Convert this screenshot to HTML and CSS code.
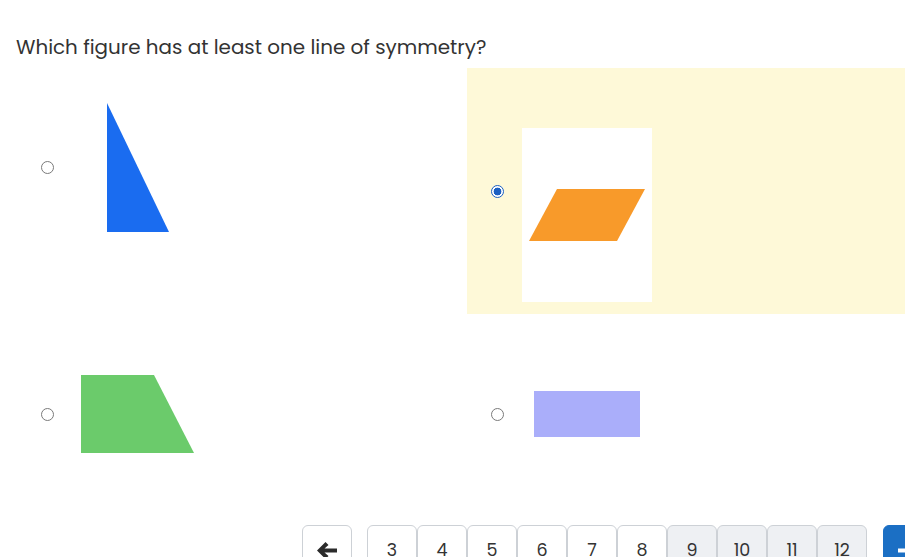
FILE: index.html
```html
<!DOCTYPE html>
<html lang="en">
<head>
<meta charset="utf-8">
<title>Question</title>
<link rel="stylesheet" href="styles.css">
</head>
<body>
<div class="page">
  <h1 class="question">Which figure has at least one line of symmetry?</h1>
  <div class="options">
    <label class="option opt-a">
      <input type="radio" name="ans" class="radio">
      <svg class="fig fig-tri" width="62" height="129" viewBox="0 0 62 129"><polygon points="0,0 62,129 0,129" fill="#1a6cf0"/></svg>
    </label>
    <label class="option opt-b selected">
      <input type="radio" name="ans" class="radio" checked>
      <span class="imgbox">
        <svg width="130" height="174" viewBox="0 0 130 174"><polygon points="7,113 35,61 123,61 95,113" fill="#f89a2a"/></svg>
      </span>
    </label>
    <label class="option opt-c">
      <input type="radio" name="ans" class="radio">
      <svg class="fig fig-trap" width="113" height="78" viewBox="0 0 113 78"><polygon points="0,0 73,0 113,78 0,78" fill="#6bcb6b"/></svg>
    </label>
    <label class="option opt-d">
      <input type="radio" name="ans" class="radio">
      <svg class="fig fig-rect" width="106" height="46" viewBox="0 0 106 46"><rect width="106" height="46" fill="#aaaefa"/></svg>
    </label>
  </div>
  <nav class="pager">
    <button class="pbtn back" aria-label="Previous">
      <svg width="22" height="19" viewBox="0 0 22 19"><path d="M9.5 1 L1 9.5 L9.5 18 L12.5 15 L8.5 11.5 H21 V7.5 H8.5 L12.5 4 Z" fill="#2b2b2b"/></svg>
    </button>
    <div class="nums">
      <button class="pbtn num">3</button>
      <button class="pbtn num">4</button>
      <button class="pbtn num">5</button>
      <button class="pbtn num">6</button>
      <button class="pbtn num">7</button>
      <button class="pbtn num">8</button>
      <button class="pbtn num dim">9</button>
      <button class="pbtn num dim">10</button>
      <button class="pbtn num dim">11</button>
      <button class="pbtn num dim">12</button>
    </div>
    <button class="pbtn next" aria-label="Next">
      <svg width="22" height="19" viewBox="0 0 22 19"><path d="M12.5 1 L21 9.5 L12.5 18 L9.5 15 L13.5 11.5 H1 V7.5 H13.5 L9.5 4 Z" fill="#ffffff"/></svg>
    </button>
  </nav>
</div>
</body>
</html>
```
FILE: styles.css
```css
html, body {
  margin: 0;
  padding: 0;
  background: #ffffff;
  overflow: hidden;
}
body {
  font-family: "Poppins", "Open Sans", "DejaVu Sans", sans-serif;
  color: #333333;
  width: 905px;
  height: 557px;
}
.page {
  width: 905px;
}
.question {
  margin: 0;
  padding: 34px 0 0 16px;
  height: 34px;
  font-size: 19.9px;
  font-weight: 400;
  line-height: 26px;
  color: #333333;
}
.options {
  display: grid;
  grid-template-columns: 467px 438px;
  grid-template-rows: 246px 200px;
}
.option {
  display: flex;
  align-items: center;
  cursor: pointer;
}
.radio {
  appearance: none;
  -webkit-appearance: none;
  width: 13px;
  height: 13px;
  margin: 0;
  border: 1px solid #7a7a7a;
  border-radius: 50%;
  background: #ffffff;
  flex: none;
  box-sizing: border-box;
}
.radio:checked {
  border: 1.5px solid #1a5fc2;
  background: radial-gradient(circle, #1a5fc2 0 3.6px, #ffffff 4.2px);
}
.opt-a {
  padding: 0 0 48px 41px;
}
.opt-a .fig {
  margin-left: 53px;
}
.opt-b {
  background: #fef9d8;
  padding-left: 24px;
}
.imgbox {
  display: block;
  align-self: flex-start;
  margin-top: 60px;
  margin-left: 18px;
  width: 130px;
  height: 174px;
  background: #ffffff;
}
.imgbox svg {
  display: block;
}
.opt-c {
  padding-left: 41px;
}
.opt-c .fig {
  margin-left: 27px;
}
.opt-d {
  padding-left: 24px;
}
.opt-d .fig {
  margin-left: 30px;
}
.fig {
  display: block;
  flex: none;
}
.pager {
  display: flex;
  margin-top: 11px;
  padding-left: 302px;
  width: 700px;
}
.pbtn {
  flex: none;
  width: 50px;
  height: 44px;
  box-sizing: border-box;
  border: 1px solid #cdd1d6;
  border-radius: 6px;
  background: #ffffff;
  font-family: "Poppins", "Open Sans", "DejaVu Sans", sans-serif;
  font-size: 17.5px;
  color: #333333;
  padding: 13px 0 0;
  margin: 0;
  display: flex;
  justify-content: center;
  align-items: flex-start;
  line-height: 22px;
}
.back {
  padding-top: 15px;
}
.nums {
  display: flex;
  margin-left: 15px;
}
.num.dim {
  background: #eef0f3;
}
.next {
  margin-left: 16px;
  background: #1b6fc4;
  border-color: #1b6fc4;
  justify-content: flex-start;
  padding-left: 13px;
  padding-top: 15px;
}
```
